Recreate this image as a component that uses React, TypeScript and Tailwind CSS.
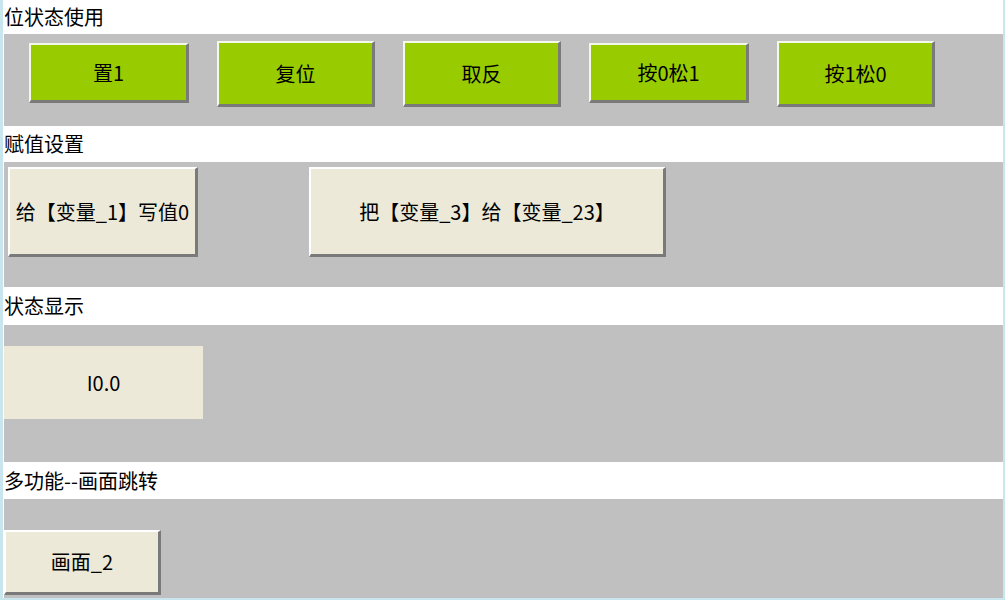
import React from "react";

const FONT = { fontFamily: '"Noto Sans CJK SC", "Liberation Sans", sans-serif' };

function GreenBtn({ label, small }: { label: string; small?: boolean }) {
  return (
    <div
      className={
        "flex items-center justify-center bg-[#99cc00] text-[20px] leading-none text-black border-t-2 border-l-2 border-t-[#f4f8e8] border-l-[#f4f8e8] border-r-[3px] border-b-[3px] border-r-[#7a7a7a] border-b-[#7a7a7a] " +
        (small ? "w-[160px] h-[60px] mt-[2px]" : "w-[158px] h-[66px]")
      }
    >
      {label}
    </div>
  );
}

function BeigeBtn({ label, cls }: { label: string; cls: string }) {
  return (
    <div
      className={
        "flex items-center justify-center bg-[#ece9d8] text-[20px] leading-none text-black border-t-2 border-l-2 border-t-white border-l-white border-r-[3px] border-b-[3px] border-r-[#7a7a7a] border-b-[#7a7a7a] " +
        cls
      }
    >
      {label}
    </div>
  );
}

function Title({ text, h }: { text: string; h: string }) {
  return (
    <div className={"flex items-center pl-[1px] text-[20px] leading-none text-black bg-white " + h}>
      {text}
    </div>
  );
}

export default function App() {
  return (
    <div className="w-[1005px] h-[600px] bg-[#c9e6ee] flex overflow-hidden" style={FONT}>
      <div className="w-[1000px] ml-[3px] h-[598px] bg-white flex flex-col">
        <Title text="位状态使用" h="h-[34px]" />
        <div className="h-[92px] ml-px bg-[#c0c0c0] flex items-start gap-[28px] pl-[25px] pt-[7px]">
          <GreenBtn label="置1" small />
          <GreenBtn label="复位" />
          <GreenBtn label="取反" />
          <GreenBtn label="按0松1" small />
          <GreenBtn label="按1松0" />
        </div>
        <Title text="赋值设置" h="h-[36px]" />
        <div className="h-[125px] ml-px bg-[#c0c0c0] flex items-start pl-[4px] pt-[5px] gap-[111px]">
          <BeigeBtn label="给【变量_1】写值0" cls="w-[190px] h-[90px]" />
          <BeigeBtn label="把【变量_3】给【变量_23】" cls="w-[357px] h-[90px]" />
        </div>
        <Title text="状态显示" h="h-[38px]" />
        <div className="h-[137px] ml-px bg-[#c0c0c0] pt-[21px]">
          <div className="w-[199px] h-[73px] bg-[#ece9d8] flex items-center justify-center text-[20px] leading-none text-black">
            I0.0
          </div>
        </div>
        <Title text="多功能--画面跳转" h="h-[37px]" />
        <div className="h-[99px] ml-px bg-[#c0c0c0] pt-[31px]">
          <BeigeBtn label="画面_2" cls="w-[157px] h-[65px]" />
        </div>
      </div>
    </div>
  );
}
